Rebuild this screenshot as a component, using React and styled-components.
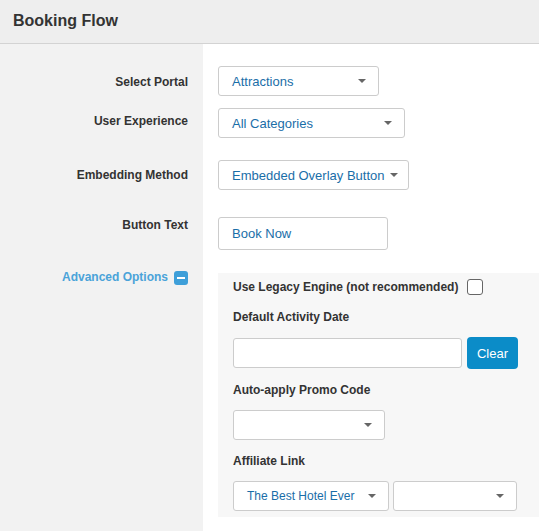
import React from "react";
import styled, { createGlobalStyle } from "styled-components";

const GlobalStyle = createGlobalStyle`
  html, body { margin: 0; padding: 0; height: 100%; }
  body {
    background: #fff;
    font-family: "Liberation Sans", Arial, sans-serif;
    color: #333;
  }
  #root { height: 100%; }
`;

const Page = styled.div`
  min-height: 100vh;
  display: flex;
  flex-direction: column;
`;

const Header = styled.header`
  box-sizing: border-box;
  height: 44px;
  padding: 11px 13px 0;
  background: #eeeeee;
  border-bottom: 1px solid #d3d3d3;
`;

const Title = styled.h1`
  margin: 0;
  font: bold 16px/19px "Liberation Sans", Arial, sans-serif;
  color: #333;
`;

const Form = styled.div`
  flex: 1;
  display: grid;
  grid-template-columns: 203px 1fr;
  grid-template-rows: auto auto auto auto 1fr;
`;

const LabelCell = styled.div`
  background: #f2f2f2;
  padding: ${(p) => p.$top}px 15px 0 0;
  text-align: right;
  font: bold 12px/17px "Liberation Sans", Arial, sans-serif;
  color: #333;
`;

const FieldCell = styled.div`
  padding: ${(p) => p.$top}px 0 0 15px;
  display: flex;
  flex-direction: column;
  align-items: flex-start;
`;

const Dropdown = styled.button`
  box-sizing: border-box;
  width: ${(p) => p.$w}px;
  height: 30px;
  display: flex;
  align-items: center;
  justify-content: space-between;
  gap: 6px;
  padding: 0 12px 0 13px;
  margin: 0;
  background: #fff;
  border: 1px solid #cccccc;
  border-radius: 3px;
  color: #1a6ea8;
  font: ${(p) => (p.$small ? 12 : 13)}px "Liberation Sans", Arial, sans-serif;
  white-space: nowrap;
  cursor: pointer;
`;

const Caret = styled.span`
  flex: none;
  width: 0;
  height: 0;
  border-left: 4px solid transparent;
  border-right: 4px solid transparent;
  border-top: 4px solid #666;
`;

const TextBox = styled.input`
  box-sizing: border-box;
  width: ${(p) => p.$w}px;
  height: ${(p) => p.$h}px;
  margin: 0;
  padding: 0 13px;
  background: #fff;
  border: 1px solid #cccccc;
  border-radius: 3px;
  color: #1a6ea8;
  font: 13px "Liberation Sans", Arial, sans-serif;
  outline: none;
`;

const ToggleLink = styled.div`
  display: flex;
  justify-content: flex-end;
  align-items: center;
  gap: 6px;
  color: #4aa3d9;
  cursor: pointer;
`;

const Panel = styled.div`
  align-self: stretch;
  background: #f7f7f7;
  padding: 6px 15px 6px;
  display: flex;
  flex-direction: column;
  align-items: flex-start;
`;

const CheckRow = styled.label`
  display: flex;
  align-items: center;
  gap: 9px;
  height: 16px;
  margin-bottom: 1px;
  font: bold 12px/17px "Liberation Sans", Arial, sans-serif;
  color: #333;
`;

const CheckBox = styled.span`
  box-sizing: border-box;
  width: 16px;
  height: 16px;
  border: 1px solid #666;
  border-radius: 3px;
  background: #fff;
`;

const SubLabel = styled.div`
  margin: 13px 0 11px;
  font: bold 12px/17px "Liberation Sans", Arial, sans-serif;
  color: #333;
`;

const InlineRow = styled.div`
  display: flex;
  align-items: center;
  gap: ${(p) => p.$gap}px;
`;

const ClearButton = styled.button`
  box-sizing: border-box;
  width: 51px;
  height: 32px;
  margin: 0;
  padding: 0;
  border: none;
  border-radius: 4px;
  background: #0b8cc8;
  color: #fff;
  font: 13px "Liberation Sans", Arial, sans-serif;
  cursor: pointer;
`;

const MinusIcon = () => (
  <svg width="14" height="14" viewBox="0 0 14 14" aria-hidden="true">
    <rect x="0" y="0" width="14" height="14" rx="3" fill="#3e9fd9" />
    <rect x="3" y="6" width="8" height="2" fill="#fff" />
  </svg>
);

const Select = ({ value, width, small }) => (
  <Dropdown type="button" $w={width} $small={small}>
    <span>{value}</span>
    <Caret />
  </Dropdown>
);

export default function App() {
  return (
    <>
      <GlobalStyle />
      <Page>
        <Header>
          <Title>Booking Flow</Title>
        </Header>
        <Form>
          <LabelCell $top={30}>Select Portal</LabelCell>
          <FieldCell $top={22}>
            <Select value="Attractions" width={161} />
          </FieldCell>

          <LabelCell $top={17}>User Experience</LabelCell>
          <FieldCell $top={12}>
            <Select value="All Categories" width={187} />
          </FieldCell>

          <LabelCell $top={29}>Embedding Method</LabelCell>
          <FieldCell $top={22}>
            <Select value="Embedded Overlay Button" width={191} />
          </FieldCell>

          <LabelCell $top={27}>Button Text</LabelCell>
          <FieldCell $top={27}>
            <TextBox $w={170} $h={33} defaultValue="Book Now" />
          </FieldCell>

          <LabelCell $top={19}>
            <ToggleLink>
              <span>Advanced Options</span>
              <MinusIcon />
            </ToggleLink>
          </LabelCell>
          <FieldCell $top={23}>
            <Panel>
              <CheckRow>
                <span>Use Legacy Engine (not recommended)</span>
                <CheckBox />
              </CheckRow>
              <SubLabel>Default Activity Date</SubLabel>
              <InlineRow $gap={5}>
                <TextBox $w={229} $h={30} />
                <ClearButton type="button">Clear</ClearButton>
              </InlineRow>
              <SubLabel>Auto-apply Promo Code</SubLabel>
              <Select value="" width={152} />
              <SubLabel>Affiliate Link</SubLabel>
              <InlineRow $gap={4}>
                <Select value="The Best Hotel Ever" width={156} small />
                <Select value="" width={124} />
              </InlineRow>
            </Panel>
          </FieldCell>
        </Form>
      </Page>
    </>
  );
}
